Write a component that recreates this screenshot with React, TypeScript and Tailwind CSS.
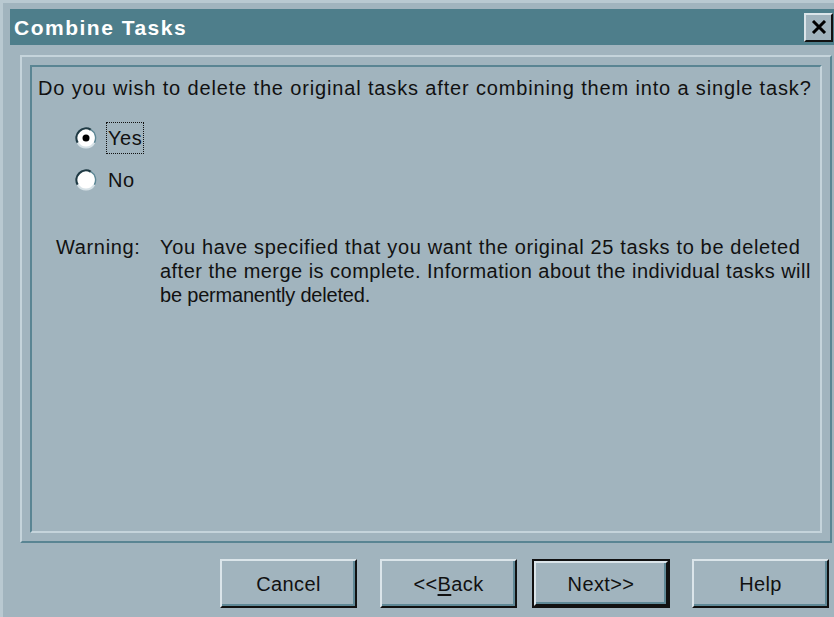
import { useState } from "react";

const sans = "font-['Liberation_Sans',Arial,sans-serif]";

function Radio({ checked }: { checked: boolean }) {
  return (
    <svg width="22" height="22" viewBox="0 0 22 22" className="shrink-0">
      <circle cx="11" cy="11" r="9.6" fill="#ffffff" />
      {/* sunken ring: dark upper-left, light lower-right */}
      <path d="M2.7 15.8 A9.6 9.6 0 0 1 15.8 2.7" stroke="#1f3a44" strokeWidth="2.2" fill="none" />
      <path d="M15.8 2.7 A9.6 9.6 0 0 1 19.3 15.8" stroke="#5d8795" strokeWidth="1.4" fill="none" />
      <path d="M19.3 15.8 A9.6 9.6 0 0 1 2.7 15.8" stroke="#d7e2e7" strokeWidth="2" fill="none" />
      {checked && <circle cx="11" cy="11" r="3.5" fill="#000000" />}
    </svg>
  );
}

function Button({
  children,
  primary,
  className,
}: {
  children: React.ReactNode;
  primary?: boolean;
  className?: string;
}) {
  const face = (
    <div className="w-full h-full border-t-2 border-l-2 border-t-[#dbe5ea] border-l-[#dbe5ea] border-b-2 border-r-2 border-b-[#111] border-r-[#111] shadow-[inset_-2px_-2px_0_#5f8896] flex items-center justify-center">
      <span className="text-[20px] text-[#111] leading-none tracking-[0.4px]">{children}</span>
    </div>
  );
  if (primary) {
    return (
      <div className={`w-[138px] h-[49px] border-2 border-[#111] ${className ?? ""}`}>
        {face}
      </div>
    );
  }
  return <div className={`w-[137px] h-[49px] ${className ?? ""}`}>{face}</div>;
}

export default function App() {
  const [deleteOriginals, setDeleteOriginals] = useState(true);

  return (
    <div
      className={`${sans} w-[834px] h-[617px] overflow-hidden bg-[#a1b4be] border-l-[3px] border-t-[3px] border-l-[#b9c9d1] border-t-[#b9c9d1] pl-[7px] pt-[6px] flex flex-col`}
    >
      {/* title bar */}
      <div className="h-[36px] bg-[#4e7e8b] flex items-center justify-between pl-[4px] pr-[1px]">
        <span className="text-white font-bold text-[21px] tracking-[1.5px] mt-[1px]">Combine Tasks</span>
        <div className="w-[29px] h-[29px] bg-[#a1b4be] border-t-2 border-l-2 border-t-[#dbe5ea] border-l-[#dbe5ea] border-b-2 border-r-2 border-b-[#111] border-r-[#111] flex items-center justify-center">
          <svg width="16" height="14" viewBox="0 0 16 14">
            <path d="M2 1 L14 13 M14 1 L2 13" stroke="#000" strokeWidth="3" />
          </svg>
        </div>
      </div>

      {/* raised frame */}
      <div className="mt-[10px] ml-[10px] w-[812px] h-[488px] border-t-2 border-l-2 border-t-[#c5d4db] border-l-[#c5d4db] border-b-2 border-r-2 border-b-[#5a8593] border-r-[#5a8593] p-[8px]">
        {/* sunken panel */}
        <div className="w-full h-full border-t-2 border-l-2 border-t-[#5a8593] border-l-[#5a8593] border-b-2 border-r-2 border-b-[#c5d4db] border-r-[#c5d4db] pl-[6px] pt-[9px] text-[#111] text-[20px]">
          <p className="leading-[24px] tracking-[0.85px] whitespace-nowrap">
            Do you wish to delete the original tasks after combining them into a single task?
          </p>

          <div className="ml-[37px] mt-[22px] flex flex-col gap-[10px]">
            <div
              className="h-[32px] flex items-center cursor-default"
              onClick={() => setDeleteOriginals(true)}
            >
              <Radio checked={deleteOriginals} />
              <span
                className={`ml-[9px] px-[1px] h-[32px] flex items-center border border-dotted tracking-[0.6px] ${
                  deleteOriginals ? "border-[#111]" : "border-transparent"
                }`}
              >
                Yes
              </span>
            </div>
            <div
              className="h-[32px] flex items-center cursor-default"
              onClick={() => setDeleteOriginals(false)}
            >
              <Radio checked={!deleteOriginals} />
              <span
                className={`ml-[9px] px-[1px] h-[32px] flex items-center border border-dotted tracking-[0.6px] ${
                  !deleteOriginals ? "border-[#111]" : "border-transparent"
                }`}
              >
                No
              </span>
            </div>
          </div>

          <div className="mt-[39px] ml-[18px] grid grid-cols-[104px_1fr] leading-[24px] whitespace-nowrap">
            <span className="tracking-[0.65px]">Warning:</span>
            <div className="flex flex-col">
              <span className="tracking-[0.65px]">
                You have specified that you want the original 25 tasks to be deleted
              </span>
              <span className="tracking-[0.47px]">
                after the merge is complete. Information about the individual tasks will
              </span>
              <span className="tracking-[-0.2px]">be permanently deleted.</span>
            </div>
          </div>
        </div>
      </div>

      {/* button row */}
      <div className="mt-[16px] flex items-start pl-[210px]">
        <Button>Cancel</Button>
        <Button className="ml-[23px]">
          &lt;&lt;<span className="underline underline-offset-[3px]">B</span>ack
        </Button>
        <Button primary className="ml-[15px]">
          Next&gt;&gt;
        </Button>
        <Button className="ml-[22px]">Help</Button>
      </div>
    </div>
  );
}
